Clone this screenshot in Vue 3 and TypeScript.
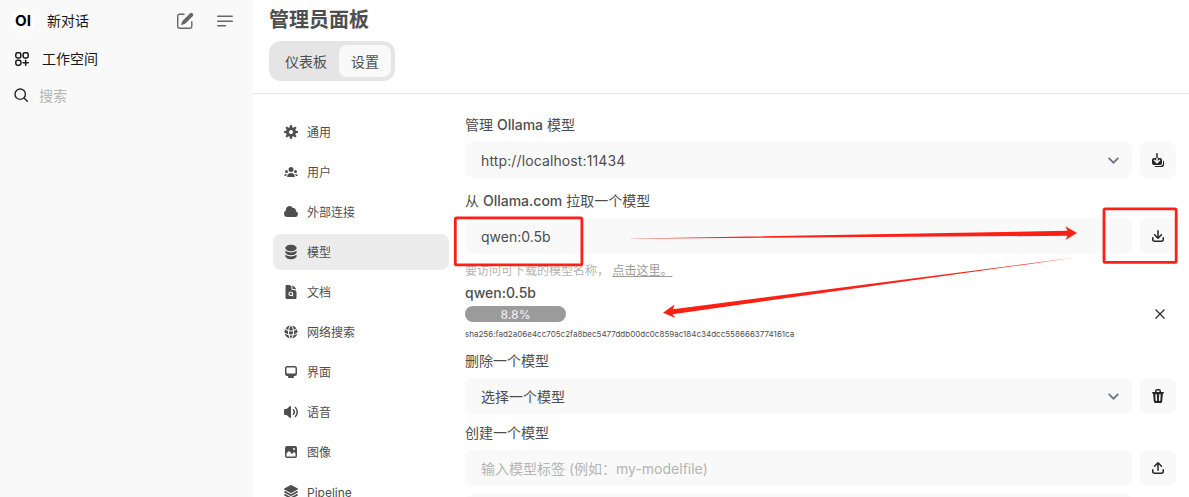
<script setup lang="ts">
interface NavItem {
  label: string
  box: number
  paths: string[]
}

const tray =
  'M3.5 9.75a.75.75 0 0 0-1.5 0v1.5A2.75 2.75 0 0 0 4.75 14h6.5A2.75 2.75 0 0 0 14 11.25v-1.5a.75.75 0 0 0-1.5 0v1.5c0 .69-.56 1.25-1.25 1.25h-6.5c-.69 0-1.25-.56-1.25-1.25v-1.5Z'

const icons = {
  updateAll: [
    'M7 1a.75.75 0 0 1 .75.75V6h-1.5V1.75A.75.75 0 0 1 7 1ZM6.25 6v2.94L5.03 7.72a.75.75 0 0 0-1.06 1.06l2.5 2.5a.75.75 0 0 0 1.06 0l2.5-2.5a.75.75 0 1 0-1.06-1.06L7.75 8.94V6H10a2 2 0 0 1 2 2v3a2 2 0 0 1-2 2H4a2 2 0 0 1-2-2V8a2 2 0 0 1 2-2h2.25Z',
    'M4.268 14A2 2 0 0 0 6 15h6a2 2 0 0 0 2-2v-3a2 2 0 0 0-1-1.732V11a3 3 0 0 1-3 3H4.268Z',
  ],
  download: [
    'M8.75 2.75a.75.75 0 0 0-1.5 0v5.69L5.03 6.22a.75.75 0 0 0-1.06 1.06l3.5 3.5a.75.75 0 0 0 1.06 0l3.5-3.5a.75.75 0 0 0-1.06-1.06L8.75 8.44V2.75Z',
    tray,
  ],
  upload: [
    'M7.25 10.25a.75.75 0 0 0 1.5 0V4.56l2.22 2.22a.75.75 0 1 0 1.06-1.06l-3.5-3.5a.75.75 0 0 0-1.06 0l-3.5 3.5a.75.75 0 0 0 1.06 1.06l2.22-2.22v5.69Z',
    tray,
  ],
  trash: [
    'M5 3.25V4H2.75a.75.75 0 0 0 0 1.5h.3l.815 8.15A1.5 1.5 0 0 0 5.357 15h5.285a1.5 1.5 0 0 0 1.493-1.35l.815-8.15h.3a.75.75 0 0 0 0-1.5H11v-.75A2.25 2.25 0 0 0 8.75 1h-1.5A2.25 2.25 0 0 0 5 3.25Zm2.25-.75a.75.75 0 0 0-.75.75V4h3v-.75a.75.75 0 0 0-.75-.75h-1.5ZM6.05 6a.75.75 0 0 1 .787.713l.275 5.5a.75.75 0 0 1-1.498.075l-.275-5.5A.75.75 0 0 1 6.05 6Zm3.9 0a.75.75 0 0 1 .712.787l-.275 5.5a.75.75 0 0 1-1.498-.075l.275-5.5a.75.75 0 0 1 .786-.711Z',
  ],
}

const nav: NavItem[] = [
  {
    label: '通用',
    box: 16,
    paths: [
      'M6.955 1.45A.5.5 0 0 1 7.452 1h1.096a.5.5 0 0 1 .497.45l.17 1.699c.484.12.94.312 1.356.562l1.321-1.081a.5.5 0 0 1 .67.033l.774.775a.5.5 0 0 1 .034.67l-1.08 1.32c.25.417.44.873.561 1.357l1.699.17a.5.5 0 0 1 .45.497v1.096a.5.5 0 0 1-.45.497l-1.699.17c-.12.484-.312.94-.562 1.356l1.082 1.322a.5.5 0 0 1-.034.67l-.774.774a.5.5 0 0 1-.67.033l-1.322-1.08c-.416.25-.872.44-1.356.561l-.17 1.699a.5.5 0 0 1-.497.45H7.452a.5.5 0 0 1-.497-.45l-.17-1.699a4.973 4.973 0 0 1-1.356-.562L4.108 13.37a.5.5 0 0 1-.67-.033l-.774-.775a.5.5 0 0 1-.034-.67l1.08-1.32a4.971 4.971 0 0 1-.561-1.357l-1.699-.17A.5.5 0 0 1 1 8.548V7.452a.5.5 0 0 1 .45-.497l1.699-.17c.12-.484.312-.94.562-1.356L2.629 4.107a.5.5 0 0 1 .034-.67l.774-.774a.5.5 0 0 1 .67-.033L5.43 3.71a4.97 4.97 0 0 1 1.356-.561l.17-1.699ZM6 8c0 .538.212 1.026.558 1.385l.057.057a2 2 0 0 0 2.828-2.828l-.058-.056A2 2 0 0 0 6 8Z',
    ],
  },
  {
    label: '用户',
    box: 16,
    paths: [
      'M8 8a2.5 2.5 0 1 0 0-5 2.5 2.5 0 0 0 0 5ZM3.156 11.763c.16-.629.44-1.21.813-1.72a2.5 2.5 0 0 0-2.725 1.377c-.136.287.102.58.418.58h1.449c.01-.077.025-.156.045-.237ZM12.847 11.763c.02.08.036.16.046.237h1.446c.316 0 .554-.293.417-.579a2.5 2.5 0 0 0-2.722-1.378c.374.51.653 1.09.813 1.72ZM14 7.5a1.5 1.5 0 1 1-3 0 1.5 1.5 0 0 1 3 0ZM3.5 9a1.5 1.5 0 1 0 0-3 1.5 1.5 0 0 0 0 3ZM5 13c-.552 0-1.013-.455-.876-.99a4.002 4.002 0 0 1 7.753 0c.136.535-.324.99-.877.99H5Z',
    ],
  },
  {
    label: '外部连接',
    box: 16,
    paths: [
      'M1 9.5A3.5 3.5 0 0 0 4.5 13H12a3 3 0 0 0 .917-5.857 2.503 2.503 0 0 0-3.198-3.019 3.5 3.5 0 0 0-6.628 2.171A3.5 3.5 0 0 0 1 9.5Z',
    ],
  },
  {
    label: '模型',
    box: 20,
    paths: [
      'M10 1c3.866 0 7 1.79 7 4s-3.134 4-7 4-7-1.79-7-4 3.134-4 7-4zm5.694 8.13c.464-.264.91-.583 1.306-.952V10c0 2.21-3.134 4-7 4s-7-1.79-7-4V8.178c.396.37.842.688 1.306.953C5.838 10.006 7.854 10.5 10 10.5s4.162-.494 5.694-1.37zM3 13.179V15c0 2.21 3.134 4 7 4s7-1.79 7-4v-1.822c-.396.37-.842.688-1.306.953-1.532.875-3.548 1.369-5.694 1.369s-4.162-.494-5.694-1.37A7.009 7.009 0 013 13.179z',
    ],
  },
  {
    label: '文档',
    box: 24,
    paths: [
      'M11.625 16.5a1.875 1.875 0 1 0 0-3.75 1.875 1.875 0 0 0 0 3.75Z',
      'M5.625 1.5H9a3.75 3.75 0 0 1 3.75 3.75v1.875c0 1.036.84 1.875 1.875 1.875H16.5a3.75 3.75 0 0 1 3.75 3.75v7.875c0 1.035-.84 1.875-1.875 1.875H5.625a1.875 1.875 0 0 1-1.875-1.875V3.375c0-1.036.84-1.875 1.875-1.875Zm6 16.5c.66 0 1.277-.19 1.797-.518l1.048 1.048a.75.75 0 0 0 1.06-1.06l-1.047-1.048A3.375 3.375 0 1 0 11.625 18Z',
      'M14.25 5.25a5.23 5.23 0 0 0-1.279-3.434 9.768 9.768 0 0 1 6.963 6.963A5.23 5.23 0 0 0 16.5 7.5h-1.875a.375.375 0 0 1-.375-.375V5.25Z',
    ],
  },
  {
    label: '网络搜索',
    box: 24,
    paths: [
      'M21.721 12.752a9.711 9.711 0 0 0-.945-5.003 12.754 12.754 0 0 1-4.339 2.708 18.991 18.991 0 0 1-.214 4.772 17.165 17.165 0 0 0 5.498-2.477ZM14.634 15.55a17.324 17.324 0 0 0 .332-4.647c-.952.227-1.945.347-2.966.347-1.021 0-2.014-.12-2.966-.347a17.515 17.515 0 0 0 .332 4.647 17.385 17.385 0 0 0 5.268 0ZM9.772 17.119a18.963 18.963 0 0 0 4.456 0A17.182 17.182 0 0 1 12 21.724a17.18 17.18 0 0 1-2.228-4.605ZM7.777 15.23a18.87 18.87 0 0 1-.214-4.774 12.753 12.753 0 0 1-4.34-2.708 9.711 9.711 0 0 0-.944 5.004 17.165 17.165 0 0 0 5.498 2.477ZM21.356 14.752a9.765 9.765 0 0 1-7.478 6.817 18.64 18.64 0 0 0 1.988-4.718 18.627 18.627 0 0 0 5.49-2.098ZM2.644 14.752c1.682.971 3.53 1.688 5.49 2.099a18.64 18.64 0 0 0 1.988 4.718 9.765 9.765 0 0 1-7.478-6.816ZM13.878 2.43a9.755 9.755 0 0 1 6.116 3.986 11.267 11.267 0 0 1-3.746 2.504 18.63 18.63 0 0 0-2.37-6.49ZM12 2.276a17.152 17.152 0 0 1 2.805 7.121c-.897.23-1.837.353-2.805.353-.968 0-1.908-.122-2.805-.353A17.151 17.151 0 0 1 12 2.276ZM10.122 2.43a18.629 18.629 0 0 0-2.37 6.49 11.266 11.266 0 0 1-3.746-2.504 9.754 9.754 0 0 1 6.116-3.985Z',
    ],
  },
  {
    label: '界面',
    box: 16,
    paths: [
      'M2 4.25A2.25 2.25 0 0 1 4.25 2h7.5A2.25 2.25 0 0 1 14 4.25v5.5A2.25 2.25 0 0 1 11.75 12h-1.312c.1.128.21.248.328.36a.75.75 0 0 1 .234.545v.345a.75.75 0 0 1-.75.75h-4.5a.75.75 0 0 1-.75-.75v-.345a.75.75 0 0 1 .234-.545c.118-.111.228-.232.328-.36H4.25A2.25 2.25 0 0 1 2 9.75v-5.5Zm2.25-.75a.75.75 0 0 0-.75.75v4.5c0 .414.336.75.75.75h7.5a.75.75 0 0 0 .75-.75v-4.5a.75.75 0 0 0-.75-.75h-7.5Z',
    ],
  },
  {
    label: '语音',
    box: 16,
    paths: [
      'M7.557 2.066A.75.75 0 0 1 8 2.75v10.5a.75.75 0 0 1-1.248.56L3.59 11H2a1 1 0 0 1-1-1V6a1 1 0 0 1 1-1h1.59l3.162-2.81a.75.75 0 0 1 .805-.124ZM12.95 3.05a.75.75 0 1 0-1.06 1.06 5.5 5.5 0 0 1 0 7.78.75.75 0 1 0 1.06 1.06 7 7 0 0 0 0-9.9Z',
      'M10.828 5.172a.75.75 0 1 0-1.06 1.06 2.5 2.5 0 0 1 0 3.536.75.75 0 1 0 1.06 1.06 4 4 0 0 0 0-5.656Z',
    ],
  },
  {
    label: '图像',
    box: 16,
    paths: [
      'M2 4a2 2 0 0 1 2-2h8a2 2 0 0 1 2 2v8a2 2 0 0 1-2 2H4a2 2 0 0 1-2-2V4Zm10.5 5.707a.5.5 0 0 0-.146-.353l-1-1a.5.5 0 0 0-.708 0L9.354 9.646a.5.5 0 0 1-.708 0L6.354 7.354a.5.5 0 0 0-.708 0l-2 2a.5.5 0 0 0-.146.353V12a.5.5 0 0 0 .5.5h8a.5.5 0 0 0 .5-.5V9.707ZM12 5a1 1 0 1 1-2 0 1 1 0 0 1 2 0Z',
    ],
  },
  {
    label: 'Pipeline',
    box: 24,
    paths: [
      'M11.644 1.59a.75.75 0 0 1 .712 0l9.75 5.25a.75.75 0 0 1 0 1.32l-9.75 5.25a.75.75 0 0 1-.712 0l-9.75-5.25a.75.75 0 0 1 0-1.32l9.75-5.25Z',
      'm3.265 10.602 7.668 4.129a2.25 2.25 0 0 0 2.134 0l7.668-4.13 1.37.739a.75.75 0 0 1 0 1.32l-9.75 5.25a.75.75 0 0 1-.71 0l-9.75-5.25a.75.75 0 0 1 0-1.32l1.37-.738Z',
      'm10.933 19.231-7.668-4.13-1.37.739a.75.75 0 0 0 0 1.32l9.75 5.25c.221.12.489.12.71 0l9.75-5.25a.75.75 0 0 0 0-1.32l-1.37-.738-7.668 4.13a2.25 2.25 0 0 1-2.134-.001Z',
    ],
  },
]

const active = '模型'
const progress = 8.8
</script>

<template>
  <div class="app">
    <aside class="sidebar">
      <div class="side-row top">
        <svg class="logo" viewBox="0 0 24 24">
          <circle cx="12" cy="12" r="12" fill="#fff" />
          <text x="4" y="17" textLength="16" lengthAdjust="spacingAndGlyphs">OI</text>
        </svg>
        <span class="new-chat">新对话</span>
        <svg class="compose" viewBox="0 0 20 20">
          <path
            d="M9 3.2H4.4a1.7 1.7 0 0 0-1.7 1.7v10.7a1.700 1.700 0 0 0 1.700 1.700h10.700a1.700 1.700 0 0 0 1.700-1.700V10.600"
            fill="none"
            stroke="currentColor"
            stroke-width="1.4"
            stroke-linecap="round"
          />
          <path
            d="M17.700 2.400a2 2 0 0 0-2.800 0L8.200 9.200c-.6.6-1 1.300-1.300 2.100l-.7 2.300c-.1.3.1.5.4.4l2.300-.7c.8-.3 1.500-.7 2.100-1.300l6.700-6.800a2 2 0 0 0 0-2.800Z"
            fill="currentColor"
          />
        </svg>
        <svg class="menu" viewBox="0 0 20 20">
          <path
            d="M2.800 5.200h14.400M2.800 10.200h14.400M2.800 14.700h7.600"
            fill="none"
            stroke="currentColor"
            stroke-width="1.600"
            stroke-linecap="round"
          />
        </svg>
      </div>
      <div class="side-row work">
        <svg class="grid-icon" viewBox="0 0 24 24" fill="none" stroke="currentColor" stroke-width="2" stroke-linecap="round">
          <path
            d="M13.5 16.875h3.375m0 0h3.375m-3.375 0V13.5m0 3.375v3.375M6 10.5h2.25a2.25 2.25 0 0 0 2.25-2.25V6a2.25 2.25 0 0 0-2.25-2.25H6A2.25 2.25 0 0 0 3.75 6v2.25A2.25 2.25 0 0 0 6 10.5Zm0 9.75h2.25A2.25 2.25 0 0 0 10.5 18v-2.25a2.25 2.25 0 0 0-2.25-2.25H6a2.25 2.25 0 0 0-2.25 2.25V18A2.25 2.25 0 0 0 6 20.25Zm9.75-9.75H18a2.25 2.25 0 0 0 2.25-2.25V6A2.25 2.25 0 0 0 18 3.75h-2.25A2.25 2.25 0 0 0 13.5 6v2.25a2.25 2.25 0 0 0 2.25 2.25Z"
          />
        </svg>
        <span>工作空间</span>
      </div>
      <div class="side-row find">
        <svg class="search-icon" viewBox="0 0 16 16" fill="none" stroke="currentColor" stroke-width="1.400" stroke-linecap="round">
          <circle cx="7.200" cy="7.200" r="5.200" />
          <path d="m11 11 3.300 3.300" />
        </svg>
        <span>搜索</span>
      </div>
    </aside>

    <main class="main">
      <header class="header">
        <h1>管理员面板</h1>
        <div class="tabs">
          <span class="tab">仪表板</span>
          <span class="tab on">设置</span>
        </div>
      </header>

      <div class="body">
        <nav class="nav">
          <div v-for="item in nav" :key="item.label" class="nav-item" :class="{ active: item.label === active }">
            <svg class="icon" :viewBox="`0 0 ${item.box} ${item.box}`">
              <path v-for="(d, i) in item.paths" :key="i" :d="d" fill-rule="evenodd" />
            </svg>
            <span class="nav-label">{{ item.label }}</span>
          </div>
        </nav>

        <section class="content">
          <div class="label">管理 <b>Ollama</b> 模型</div>
          <div class="row">
            <div class="field">
              <span class="url">http://localhost:11434</span>
              <svg class="chevron" viewBox="0 0 12 12"><path d="m1.500 3.500 4.500 4.500 4.500-4.500" /></svg>
            </div>
            <div class="btn">
              <svg class="icon" viewBox="0 0 16 16"><path v-for="d in icons.updateAll" :key="d" :d="d" /></svg>
            </div>
          </div>

          <div class="label second">从 <b>Ollama.com</b> 拉取一个模型</div>
          <div class="row">
            <div class="field"><span>qwen:0.5b</span></div>
            <div class="btn">
              <svg class="icon" viewBox="0 0 16 16"><path v-for="d in icons.download" :key="d" :d="d" /></svg>
            </div>
          </div>
          <div class="hint">要访问可下载的模型名称， <span class="link">点击这里。</span></div>

          <div class="pull">
            <div class="pull-info">
              <div class="pull-name">qwen:0.5b</div>
              <div class="bar">{{ progress }}%</div>
            </div>
            <svg class="close" viewBox="0 0 12 12"><path d="m1.500 1.500 9 9m0-9-9 9" /></svg>
          </div>
          <div class="digest">sha256:fad2a06e4cc705c2fa8bec5477ddb00dc0c859ac184c34dcc5586663774161ca</div>

          <div class="label third">删除一个模型</div>
          <div class="row">
            <div class="field">
              <span>选择一个模型</span>
              <svg class="chevron" viewBox="0 0 12 12"><path d="m1.500 3.500 4.500 4.500 4.500-4.500" /></svg>
            </div>
            <div class="btn">
              <svg class="icon" viewBox="0 0 16 16">
                <path v-for="d in icons.trash" :key="d" :d="d" fill-rule="evenodd" />
              </svg>
            </div>
          </div>

          <div class="label fourth">创建一个模型</div>
          <div class="row">
            <div class="field placeholder"><span>输入模型标签 (例如：my-modelfile)</span></div>
            <div class="btn">
              <svg class="icon" viewBox="0 0 16 16"><path v-for="d in icons.upload" :key="d" :d="d" /></svg>
            </div>
          </div>
          <div class="row next">
            <div class="field"></div>
            <div class="spacer"></div>
          </div>
        </section>
      </div>
    </main>

    <!-- Red call-outs laid over the page -->
    <svg class="marks" viewBox="0 0 1189 497">
      <rect x="455.300" y="217.900" width="126.600" height="47" rx="1.500" />
      <rect x="1104" y="208.900" width="72.200" height="53.500" rx="1.500" />
      <path d="M622 238.700 1067.500 230.800 1065.300 226.300 1077 233 1065.500 240 1067.500 235.800Z" />
      <path d="M1077 257.300 673 309.200 674.500 304.500 663 312.700 675.500 318 672.500 314.200Z" />
    </svg>
  </div>
</template>

<style>
body {
  overflow: hidden;
  background: #fff;
}
</style>

<style scoped>
.app {
  position: relative;
  display: flex;
  width: 1189px;
  height: 497px;
  overflow: hidden;
  font-family: Inter, 'Noto Sans CJK SC', sans-serif;
  font-size: 14px;
  line-height: 20px;
  color: #4e4e4e;
}
svg {
  display: block;
  flex: none;
}
.sidebar {
  width: 253px;
  flex: none;
  background: #f9f9f9;
  color: #171717;
}
.side-row {
  display: flex;
  align-items: center;
}
.top {
  height: 42px;
  padding: 0 18px 0 11px;
}
.logo {
  width: 24px;
  height: 24px;
}
.logo text {
  font-size: 14.5px;
  font-weight: 700;
  fill: #000;
}
.new-chat {
  flex: 1;
  margin-left: 12px;
}
.compose,
.menu {
  width: 20px;
  height: 20px;
  color: #676767;
}
.menu {
  margin-left: 20px;
}
.work {
  height: 34px;
  padding-left: 13px;
}
.grid-icon {
  width: 18px;
  height: 18px;
  margin-right: 11px;
}
.find {
  height: 40px;
  padding-left: 13px;
  color: #b4b4b4;
}
.search-icon {
  width: 16px;
  height: 16px;
  margin: 0 10px 3px 0;
  color: #262626;
}
.main {
  flex: 1;
  min-width: 0;
}
.header {
  height: 93px;
  padding-left: 16px;
  border-bottom: 1px solid #e3e3e3;
  box-sizing: content-box;
}
h1 {
  margin: 0;
  padding: 6px 0 7px;
  font-size: 20px;
  line-height: 28px;
  font-weight: 600;
}
.tabs {
  display: inline-flex;
  padding: 4px;
  border-radius: 12px;
  background: #e5e5e5;
  vertical-align: top;
}
.tab {
  height: 32px;
  padding: 0 12px;
  line-height: 33px;
  border-radius: 8px;
}
.tab.on {
  background: #f9f9f9;
}
.body {
  display: flex;
  padding: 20px 13px 0 20px;
}
.nav {
  display: flex;
  flex-direction: column;
  gap: 4px;
  width: 176px;
  flex: none;
}
.nav-item {
  display: flex;
  align-items: center;
  gap: 8px;
  height: 36px;
  padding-left: 10px;
  border-radius: 8px;
  font-size: 12px;
}
.nav-label {
  padding-top: 2px;
}
.nav-item.active {
  background: #ececec;
}
.icon {
  width: 16px;
  height: 16px;
  fill: currentColor;
}
.content {
  flex: 1;
  min-width: 0;
  margin-left: 16px;
}
.label {
  margin: 1px 0 7px;
}
.label b {
  font-weight: 500;
}
.label.second {
  margin-top: 13px;
}
.label.third {
  margin-top: 10px;
}
.label.fourth {
  margin-top: 9px;
}
.row {
  display: flex;
  gap: 8px;
}
.field {
  display: flex;
  flex: 1;
  align-items: center;
  justify-content: space-between;
  height: 36px;
  padding: 0 12px 0 16px;
  border-radius: 8px;
  background: #f9f9f9;
}
.field span {
  padding-top: 2px;
}
.url {
  letter-spacing: 0.12px;
}
.field.placeholder {
  color: #b4b4b4;
}
.chevron {
  width: 13px;
  height: 13px;
  fill: none;
  stroke: #6b7280;
  stroke-width: 1.6;
}
.btn {
  display: flex;
  align-items: center;
  justify-content: center;
  width: 36px;
  height: 36px;
  border-radius: 8px;
  background: #f9f9f9;
  color: #262626;
}
.hint {
  margin-top: 8px;
  font-size: 12px;
  line-height: 17px;
  color: #b4b4b4;
}
.link {
  color: #9b9b9b;
  text-decoration: underline;
}
.pull {
  display: flex;
  align-items: flex-end;
  justify-content: space-between;
  margin-top: 4px;
}
.pull-name {
  margin-bottom: 3px;
  font-weight: 500;
}
.bar {
  width: 101px;
  height: 16px;
  border-radius: 8px;
  background: #9b9b9b;
  color: #ececec;
  font-size: 12px;
  font-weight: 500;
  line-height: 17px;
  text-align: center;
}
.close {
  width: 12px;
  height: 12px;
  margin: 0 10px 2px 0;
  fill: none;
  stroke: #333;
  stroke-width: 1.4;
}
.digest {
  margin-top: 6px;
  font-size: 8px;
  line-height: 13px;
  letter-spacing: 0.012px;
}
.next {
  margin-top: 8px;
}
.spacer {
  width: 36px;
}
.marks {
  position: absolute;
  inset: 0;
  width: 1189px;
  height: 497px;
  fill: #ff2015;
}
.marks rect {
  fill: none;
  stroke: #ff2015;
  stroke-width: 2.800;
}
</style>
